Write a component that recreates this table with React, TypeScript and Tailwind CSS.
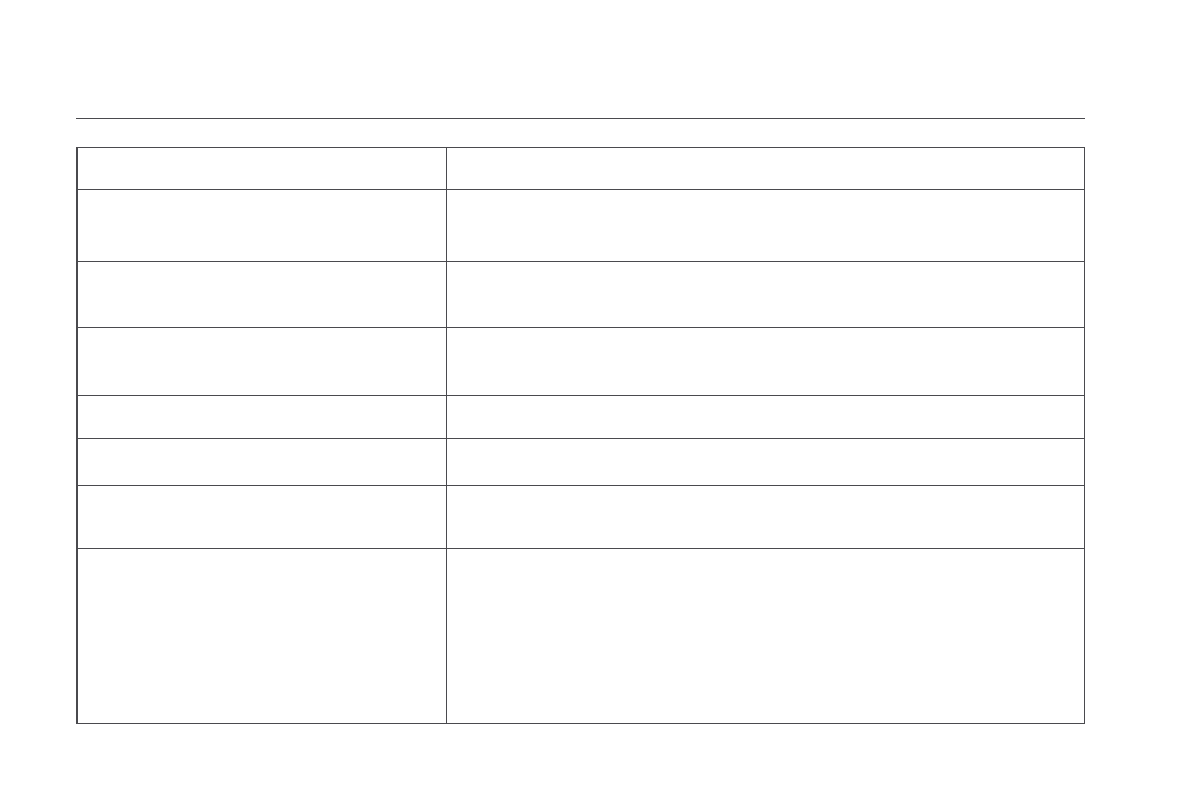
const rows = [41, 72, 66, 68, 43, 47, 63, 175];

export default function App() {
  return (
    <div className="min-h-[800px] w-full bg-white" style={{ fontFamily: '"Liberation Sans", Arial, sans-serif' }}>
      <div className="ml-[76px] w-[1009px] pt-[118px]">
        <div className="border-t border-[#4a4a4e]" />
        <div className="mt-[28px] border-t border-r border-b border-l-2 border-[#4a4a4e]">
          {rows.map((h, i) => (
            <div
              key={i}
              className={"grid grid-cols-[368px_1fr] " + (i > 0 ? "border-t border-[#4a4a4e]" : "")}
              style={{ height: h }}
            >
              <div />
              <div className="border-l border-[#4a4a4e]" />
            </div>
          ))}
        </div>
      </div>
    </div>
  );
}
